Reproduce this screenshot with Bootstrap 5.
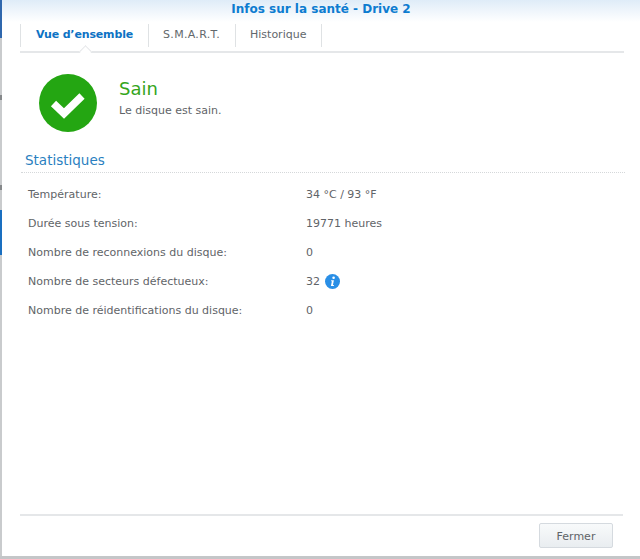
<!DOCTYPE html>
<html lang="fr">
<head>
    <meta charset="UTF-8">
    <meta name="viewport" content="width=device-width, initial-scale=1.0">
    <title>Infos sur la santé - Drive 2</title>
    <link href="https://cdn.jsdelivr.net/npm/bootstrap@5.3.0/dist/css/bootstrap.min.css" rel="stylesheet">
    <style>
        html, body {
            height: 559px;
            overflow: hidden;
        }
        body {
            background: #c4c6c8;
            font-family: "DejaVu Sans", sans-serif;
            font-size: 11px;
            color: #5f6468;
        }
        .desk-strip {
            width: 2px;
            height: 556px;
            background: #c9cbcd;
        }
        .strip-blue-top { height: 38px; background: #2f67ad; }
        .strip-gap-a { height: 57px; }
        .strip-mark { height: 5px; background: #85888a; }
        .strip-gap-b { height: 85px; }
        .strip-gap-c { height: 20px; }
        .strip-blue-mid { height: 45px; background: #1a6fc0; }
        .health-window {
            width: 638px;
            height: 556px;
            background: #fff;
        }
        .window-title {
            height: 22px;
            background: linear-gradient(#dfecf8, #fff);
            color: #0d7cd0;
            font-size: 12px;
            font-weight: 700;
            line-height: 18px;
            text-align: center;
        }
        .tab-bar {
            margin: 0 0 0 18px;
            width: 604px;
            height: 31px;
            border-bottom: 2px solid #e5e7e9;
        }
        .tab-item {
            height: 23px;
            margin-top: 2px;
            border-right: 1px solid #dfe2e4;
            line-height: 21px;
            padding: 0 15px 0 14px;
            color: #62686c;
        }
        .tab-item:nth-child(2) {
            letter-spacing: 0.3px;
        }
        .tab-item:first-child {
            border-left: 1px solid #dfe2e4;
            padding: 0 15px;
            letter-spacing: -0.15px;
            color: #0d72c4;
            font-weight: 700;
            position: relative;
        }
        .tab-item:first-child::after {
            content: "";
            position: absolute;
            left: 60px;
            bottom: -9px;
            width: 9px;
            height: 9px;
            background: #fff;
            border-left: 1px solid #e5e7e9;
            border-top: 1px solid #e5e7e9;
            transform: rotate(45deg);
        }
        .status-row {
            padding: 21px 0 0 37px;
            height: 99px;
        }
        .status-text {
            margin-left: 22px;
            padding-top: 4px;
        }
        .status-name {
            color: #35a51c;
            font-size: 18px;
            line-height: 22px;
        }
        .status-desc {
            line-height: 16px;
            margin-top: 3px;
        }
        .section-title {
            margin: 0 0 0 23px;
            width: 600px;
            height: 17px;
            color: #2a7fc0;
            font-size: 13.5px;
            line-height: 17px;
        }
        .section-rule {
            margin: 3px 0 0 19px;
            width: 604px;
            border-top: 1px dotted #d5d8da;
        }
        .stat-list {
            margin: 7px 0 0 26px;
        }
        .stat-row {
            height: 29px;
            line-height: 29px;
        }
        .stat-name {
            width: 278px;
        }
        .info-dot {
            width: 15px;
            height: 15px;
            margin-left: 5px;
        }
        .window-foot {
            margin: 0 0 0 18px;
            width: 603px;
            border-top: 2px solid #e5e7e9;
            padding: 7px 10px 0 0;
        }
        .close-btn {
            width: 74px;
            height: 25px;
            padding: 3px 0 0;
            font-size: 11px;
            color: #5f6468;
            background: linear-gradient(#f8fafb, #e9edf0);
            border: 1px solid #d5dadf;
            border-radius: 2px;
        }
        .foot-space {
            height: 8px;
        }
    </style>
</head>
<body>
    <div class="d-flex">
        <div class="desk-strip">
            <div class="strip-blue-top"></div>
            <div class="strip-gap-a"></div>
            <div class="strip-mark"></div>
            <div class="strip-gap-b"></div>
            <div class="strip-mark"></div>
            <div class="strip-gap-c"></div>
            <div class="strip-blue-mid"></div>
        </div>
        <div class="health-window d-flex flex-column">
            <div class="window-title">Infos sur la santé - Drive 2</div>
            <div class="tab-bar d-flex">
                <div class="tab-item">Vue d’ensemble</div>
                <div class="tab-item">S.M.A.R.T.</div>
                <div class="tab-item">Historique</div>
            </div>
            <div class="status-row d-flex">
                <svg width="58" height="58" viewBox="0 0 58 58">
                    <circle cx="29" cy="29" r="29" fill="#24a612"/>
                    <path d="M14.5 29.5 L25 39.5 L43 22" fill="none" stroke="#fff" stroke-width="7.5"/>
                </svg>
                <div class="status-text">
                    <div class="status-name">Sain</div>
                    <div class="status-desc">Le disque est sain.</div>
                </div>
            </div>
            <div class="section-title">Statistiques</div>
            <div class="section-rule"></div>
            <div class="stat-list flex-grow-1">
                <div class="stat-row d-flex"><div class="stat-name">Température:</div><div>34 °C / 93 °F</div></div>
                <div class="stat-row d-flex"><div class="stat-name">Durée sous tension:</div><div>19771 heures</div></div>
                <div class="stat-row d-flex"><div class="stat-name">Nombre de reconnexions du disque:</div><div>0</div></div>
                <div class="stat-row d-flex align-items-center"><div class="stat-name">Nombre de secteurs défectueux:</div><div>32</div>
                    <svg class="info-dot" viewBox="0 0 15 15">
                        <circle cx="7.5" cy="7.5" r="7.5" fill="#2a8fe6"/>
                        <circle cx="8.6" cy="3.7" r="1.3" fill="#fff"/>
                        <path d="M6.2 6.2 H8.9 L7.9 11 H9 L8.8 12 H5.9 L6.9 7.2 H6 Z" fill="#fff"/>
                    </svg>
                </div>
                <div class="stat-row d-flex"><div class="stat-name">Nombre de réidentifications du disque:</div><div>0</div></div>
            </div>
            <div class="window-foot d-flex justify-content-end">
                <button type="button" class="btn close-btn">Fermer</button>
            </div>
            <div class="foot-space"></div>
        </div>
    </div>
    <script src="https://cdn.jsdelivr.net/npm/bootstrap@5.3.0/dist/js/bootstrap.bundle.min.js"></script>
</body>
</html>
